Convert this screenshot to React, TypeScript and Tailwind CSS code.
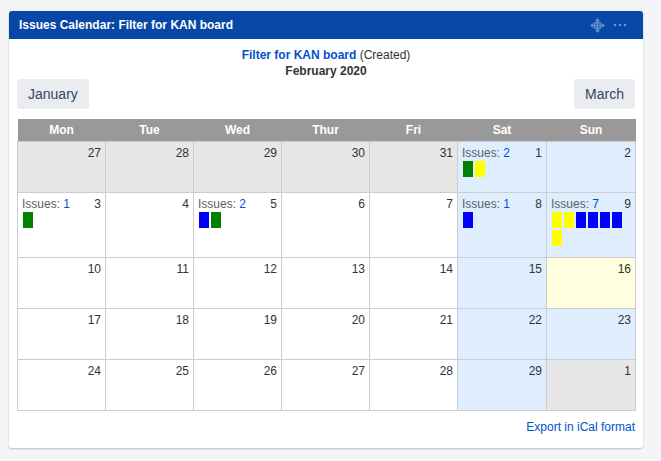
import React from "react";

type Cell = { d: number; bg?: string; issues?: number; chips?: string[] };

const G = "bg-[#008000]";
const Y = "bg-[#ffff00]";
const B = "bg-[#0000ff]";
const grey = "bg-[#e7e7e7]";
const we = "bg-[#deeeff]";

const rows: { h: string; cells: Cell[] }[] = [
  {
    h: "h-[51px]",
    cells: [
      { d: 27, bg: grey },
      { d: 28, bg: grey },
      { d: 29, bg: grey },
      { d: 30, bg: grey },
      { d: 31, bg: grey },
      { d: 1, bg: we, issues: 2, chips: [G, Y] },
      { d: 2, bg: we },
    ],
  },
  {
    h: "h-[65px]",
    cells: [
      { d: 3, issues: 1, chips: [G] },
      { d: 4 },
      { d: 5, issues: 2, chips: [B, G] },
      { d: 6 },
      { d: 7 },
      { d: 8, bg: we, issues: 1, chips: [B] },
      { d: 9, bg: we, issues: 7, chips: [Y, Y, B, B, B, B, Y] },
    ],
  },
  {
    h: "h-[51px]",
    cells: [
      { d: 10 },
      { d: 11 },
      { d: 12 },
      { d: 13 },
      { d: 14 },
      { d: 15, bg: we },
      { d: 16, bg: "bg-[#ffffdd]" },
    ],
  },
  {
    h: "h-[51px]",
    cells: [
      { d: 17 },
      { d: 18 },
      { d: 19 },
      { d: 20 },
      { d: 21 },
      { d: 22, bg: we },
      { d: 23, bg: we },
    ],
  },
  {
    h: "h-[51px]",
    cells: [
      { d: 24 },
      { d: 25 },
      { d: 26 },
      { d: 27 },
      { d: 28 },
      { d: 29, bg: we },
      { d: 1, bg: grey },
    ],
  },
];

const days = ["Mon", "Tue", "Wed", "Thur", "Fri", "Sat", "Sun"];

function Nav({ label }: { label: string }) {
  return (
    <button className="h-[30px] px-[11px] rounded-[3px] bg-[#ebecf0] text-[14px] text-[#344563] leading-[30px]">
      {label}
    </button>
  );
}

export default function App() {
  return (
    <div className="w-[661px] h-[461px] bg-[#f4f5f7] pt-[11px] pl-[9px] overflow-hidden font-['Liberation_Sans',Arial,sans-serif] text-[12px] text-[#333333]">
      <div className="w-[634px] h-[437px] bg-white rounded-[3px] shadow-[0_1px_2px_rgba(9,30,66,0.25)]">
        <div className="h-[28px] bg-[#0747a6] rounded-t-[3px] flex items-center justify-between pl-[10px] pr-[16px]">
          <span className="text-white font-bold text-[12px]">Issues Calendar: Filter for KAN board</span>
          <div className="flex items-center gap-[8px]">
            <svg width="15" height="15" viewBox="0 0 15 15" fill="none" stroke="#5f8ccf" strokeWidth="1.6">
              <path d="M7.5 1v13M1 7.5h13" />
              <path d="M4.9 3 7.5 0l2.6 3zM4.9 12l2.6 3 2.6-3zM3 4.9 0 7.5l3 2.6zM12 4.9l3 2.6-3 2.6z" fill="#5f8ccf" stroke="none" />
              <rect x="4.6" y="4.6" width="5.8" height="5.8" rx="1" />
            </svg>
            <svg width="14" height="4" viewBox="0 0 14 4" fill="#6b93d0">
              <circle cx="2" cy="2" r="1.3" />
              <circle cx="7" cy="2" r="1.3" />
              <circle cx="12" cy="2" r="1.3" />
            </svg>
          </div>
        </div>
        <div className="px-[8px] pt-[8px]">
          <div className="text-center leading-[16px] text-[12px]">
            <div>
              <span className="font-bold text-[#0052cc]">Filter for KAN board</span> (Created)
            </div>
            <div className="font-bold">February 2020</div>
          </div>
          <div className="flex justify-between w-[618px]">
            <Nav label="January" />
            <Nav label="March" />
          </div>
          <table className="mt-[10px] w-[618px] table-fixed border-collapse">
            <colgroup>
              <col className="w-[88px]" />
              <col className="w-[88px]" />
              <col className="w-[88px]" />
              <col className="w-[88px]" />
              <col className="w-[88px]" />
              <col className="w-[89px]" />
              <col className="w-[89px]" />
            </colgroup>
            <thead>
              <tr className="h-[22px] bg-[#999999]">
                {days.map((d) => (
                  <th key={d} className="text-white font-bold text-[12px] p-0">
                    {d}
                  </th>
                ))}
              </tr>
            </thead>
            <tbody>
              {rows.map((r, i) => (
                <tr key={i} className={r.h}>
                  {r.cells.map((c, j) => (
                    <td key={j} className={`border border-[#cccccc] align-top pt-[3px] px-[4px] pb-0 ${c.bg ?? "bg-white"}`}>
                      <div className="flex justify-between leading-[16px]">
                        {c.issues ? (
                          <span className="text-[#5f5f5f]">
                            Issues: <span className="text-[#0052cc]">{c.issues}</span>
                          </span>
                        ) : (
                          <span />
                        )}
                        <span>{c.d}</span>
                      </div>
                      {c.chips && (
                        <div className="flex flex-wrap gap-x-[2px] gap-y-[2px] mt-0 pl-[1px]">
                          {c.chips.map((k, n) => (
                            <span key={n} className={`w-[10px] h-[16px] ${k}`} />
                          ))}
                        </div>
                      )}
                    </td>
                  ))}
                </tr>
              ))}
            </tbody>
          </table>
          <div className="text-right mt-[8px] text-[#0052cc] leading-[16px]">Export in iCal format</div>
        </div>
      </div>
    </div>
  );
}
